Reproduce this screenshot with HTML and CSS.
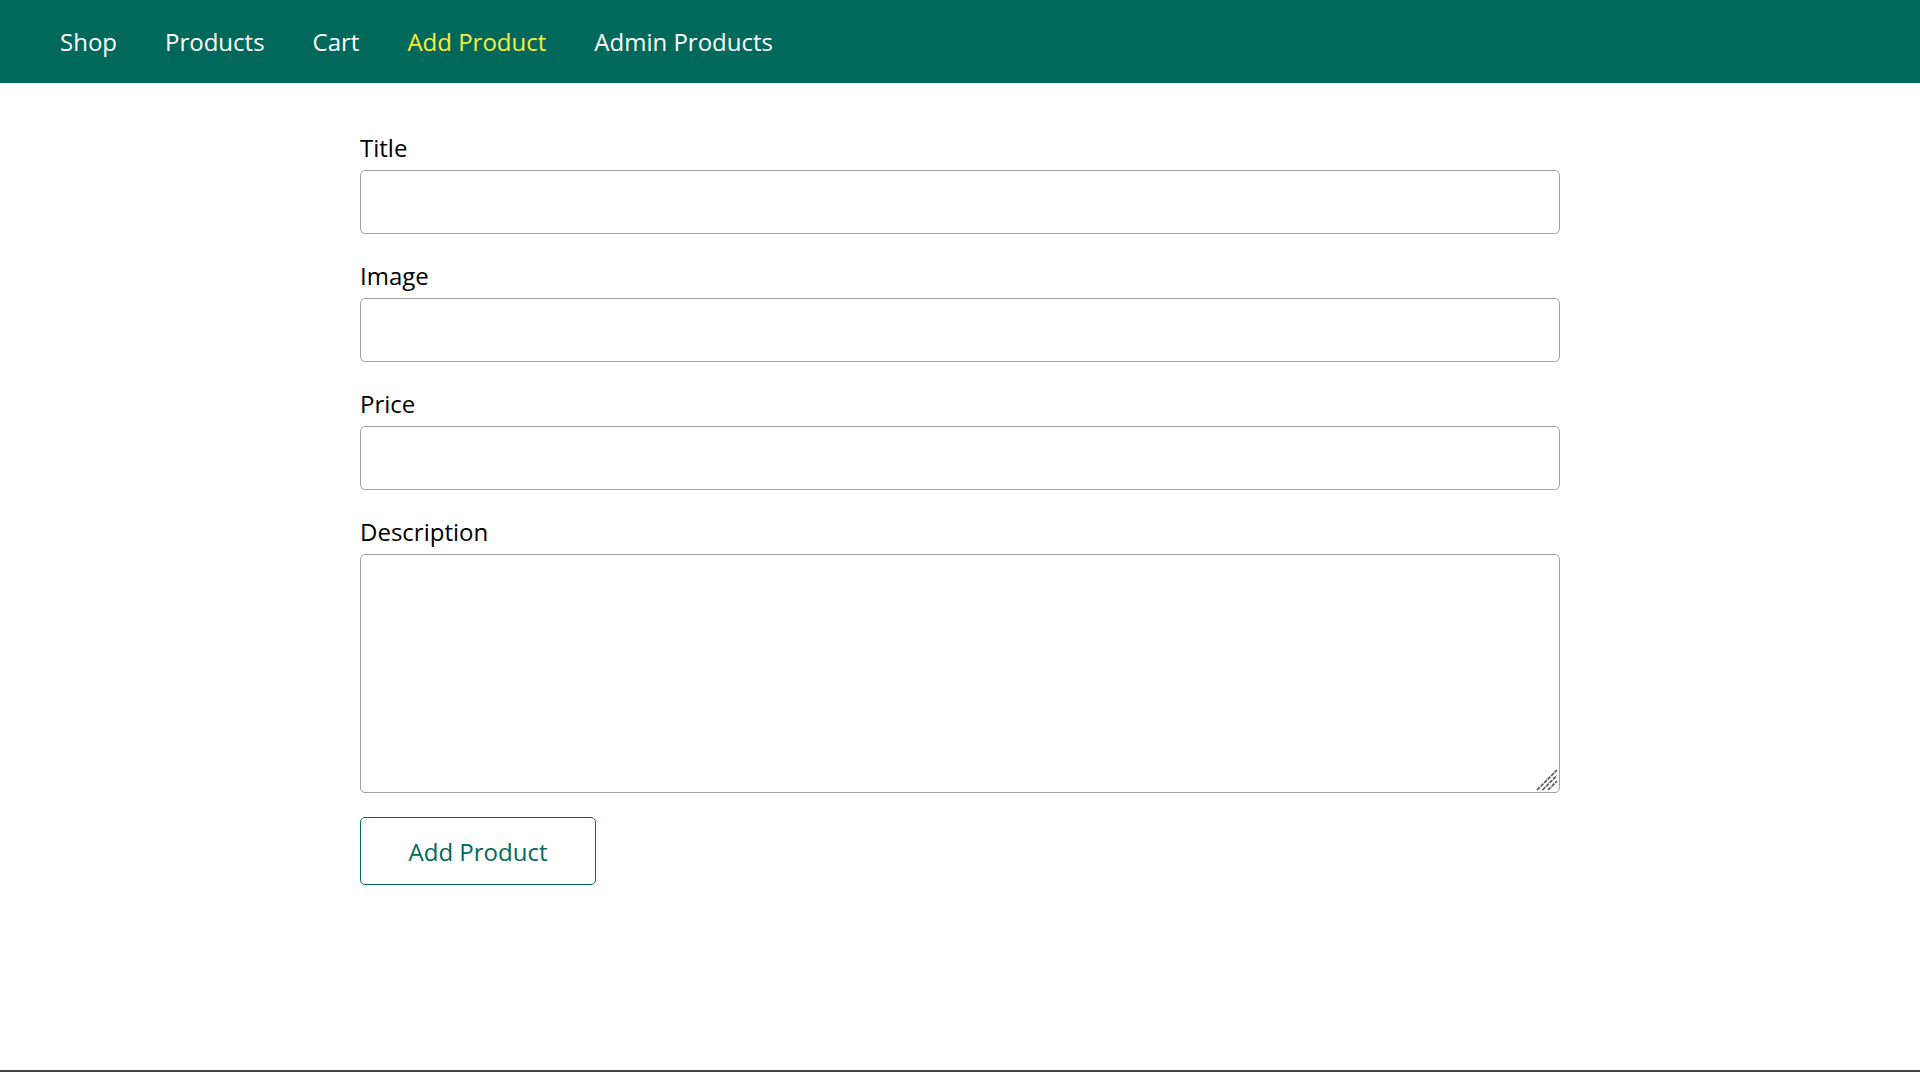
FILE: index.html
```html
<!DOCTYPE html>
<html lang="en">
<head>
<meta charset="utf-8">
<title>Add Product</title>
<link rel="stylesheet" href="styles.css">
</head>
<body>
<div class="page">
  <header class="main-header">
    <nav class="main-header__nav">
      <ul class="main-header__item-list">
        <li class="main-header__item"><a href="#">Shop</a></li>
        <li class="main-header__item"><a href="#">Products</a></li>
        <li class="main-header__item"><a href="#">Cart</a></li>
        <li class="main-header__item"><a class="active" href="#">Add Product</a></li>
        <li class="main-header__item"><a href="#">Admin Products</a></li>
      </ul>
    </nav>
  </header>
  <main class="main">
    <form class="product-form">
      <div class="form-control">
        <label for="title">Title</label>
        <input type="text" id="title" name="title">
      </div>
      <div class="form-control">
        <label for="imageUrl">Image</label>
        <input type="text" id="imageUrl" name="imageUrl">
      </div>
      <div class="form-control">
        <label for="price">Price</label>
        <input type="text" id="price" name="price">
      </div>
      <div class="form-control">
        <label for="description">Description</label>
        <div class="textarea-wrap">
          <textarea id="description" name="description"></textarea>
          <svg class="resize-handle" width="22" height="22" viewBox="0 0 22 22" aria-hidden="true">
            <line x1="1" y1="21" x2="21" y2="1" />
            <line x1="6.5" y1="21" x2="21" y2="6.5" />
            <line x1="12" y1="21" x2="21" y2="12" />
          </svg>
        </div>
      </div>
      <button class="btn" type="button">Add Product</button>
    </form>
  </main>
  <div class="bottom-line"></div>
</div>
</body>
</html>
```

FILE: styles.css
```css
* {
  box-sizing: border-box;
}

html, body {
  margin: 0;
  padding: 0;
  height: 100%;
}

body {
  font-family: "Open Sans", "Noto Sans", sans-serif;
  font-size: 24px;
  color: #000;
  background: #fff;
}

.page {
  min-height: 100%;
  display: flex;
  flex-direction: column;
}

.main-header {
  width: 100%;
  height: 83px;
  background-color: #00695c;
  padding: 0 36px;
  flex: none;
}

.main-header__nav {
  height: 100%;
  display: flex;
  align-items: center;
}

.main-header__item-list {
  list-style: none;
  margin: 0;
  padding: 0;
  display: flex;
}

.main-header__item {
  margin: 0 24px;
  padding: 0;
}

.main-header__item a {
  text-decoration: none;
  color: #fff;
  line-height: 33px;
}

.main-header__item a.active {
  color: #ffeb3b;
}

.main {
  flex: 1;
  padding: 24px;
}

.product-form {
  width: 1200px;
  margin: 0 auto;
}

.form-control {
  margin: 25px 0 24px;
}

.form-control:first-child {
  margin-top: 24px;
}

.form-control label {
  display: block;
  line-height: 33px;
  margin-bottom: 6px;
}

.form-control input,
.form-control textarea {
  display: block;
  width: 100%;
  font: inherit;
  border: 1px solid #a1a1a1;
  border-radius: 5px;
  padding: 6px 9px;
  margin: 0;
  background: #fff;
}

.form-control input {
  height: 64px;
}

.textarea-wrap {
  position: relative;
}

.form-control textarea {
  height: 239px;
  resize: none;
}

.resize-handle {
  position: absolute;
  right: 2px;
  bottom: 2px;
  pointer-events: none;
  stroke: #555;
  stroke-width: 1.6;
  stroke-dasharray: 4 1;
}

.btn {
  display: block;
  font: inherit;
  border: 1.5px solid #00695c;
  color: #00695c;
  background: #fff;
  border-radius: 5px;
  width: 236px;
  height: 68px;
  padding: 0;
  cursor: pointer;
}

.bottom-line {
  flex: none;
  height: 2px;
  background: #444;
}
```
